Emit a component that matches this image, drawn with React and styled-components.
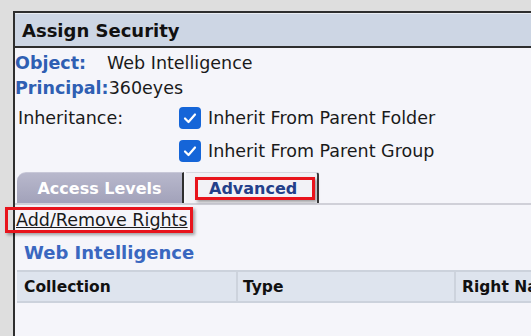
import React from 'react';
import styled, { createGlobalStyle } from 'styled-components';

const GlobalStyle = createGlobalStyle`
  html, body {
    margin: 0;
    padding: 0;
    background: #dedede;
    overflow: hidden;
  }
  body {
    font-family: "DejaVu Sans", Verdana, sans-serif;
  }
`;

const Page = styled.div`
  width: 531px;
  height: 336px;
  box-sizing: border-box;
  padding: 11px 0 0 13px;
  background: #dedede;
  overflow: hidden;
`;

const Dialog = styled.div`
  height: 100%;
  border-left: 2px solid #2e2e2e;
  border-top: 2px solid #2e2e2e;
  background: #f5f5fa;
  display: flex;
  flex-direction: column;
`;

const TitleBar = styled.div`
  height: 32px;
  background: #cdd6e4;
  border-top: 1px solid #e8ecf2;
  border-bottom: 2px solid #2e2e2e;
  display: flex;
  align-items: center;
  padding-left: 7px;
  font-weight: bold;
  font-size: 18px;
  color: #111;
`;

const Info = styled.div`
  padding-top: 2px;
`;

const InfoRow = styled.div`
  display: flex;
  align-items: center;
  height: 25px;
  font-size: 17.5px;
  color: #1a1a1a;
`;

const InfoLabel = styled.span`
  color: #2f5fb3;
  font-weight: bold;
  width: ${p => p.width || 'auto'};
`;

const Inherit = styled.div`
  display: grid;
  grid-template-columns: 161px auto;
  row-gap: 11px;
  padding: 7px 0 0 3px;
  font-size: 17.5px;
  color: #1a1a1a;
`;

const CheckRow = styled.label`
  display: flex;
  align-items: center;
  gap: 7px;
`;

const Box = styled.span`
  width: 22px;
  height: 22px;
  border-radius: 4px;
  background: #1565d8;
  display: flex;
  align-items: center;
  justify-content: center;
`;

const Tabs = styled.div`
  display: flex;
  align-items: flex-end;
  margin-top: 10px;
  padding-left: 2px;
  border-bottom: 2px solid #d0d0d8;
`;

const Tab = styled.div`
  height: 31px;
  display: flex;
  align-items: center;
  box-sizing: border-box;
  font-weight: bold;
  font-size: 16px;
  ${p => p.active ? `
    width: 133px;
    margin-left: 2px;
    background: #f2f2f6;
    border-top: 1px solid #d8d8e0;
    border-right: 2px solid #3a3a3a;
    border-top-right-radius: 3px;
    color: #23408a;
    padding-left: 9px;
  ` : `
    width: 167px;
    background: linear-gradient(#b8b8cc, #a2a2ba);
    border-top-left-radius: 9px;
    border-right: 2px solid #2e2e2e;
    border-top: 1px solid #c8c8d8;
    color: #fff;
    justify-content: center;
  `}
`;

const Highlight = styled.span`
  border: 3px solid #e8141c;
  box-shadow: 2px 2px 3px rgba(0, 0, 0, 0.35);
  display: inline-flex;
  align-items: center;
  box-sizing: border-box;
`;

const AdvancedBox = styled(Highlight)`
  width: 120px;
  height: 23px;
  padding-left: 11px;
`;

const LinkRow = styled.div`
  margin: 2px 0 0 -10px;
`;

const LinkBox = styled(Highlight)`
  height: 26px;
  padding: 0 2px 0 8px;
`;

const Link = styled.a`
  font-size: 17.5px;
  color: #1a1a1a;
  text-decoration: underline;
`;

const Section = styled.div`
  padding: 9px 0 0 9px;
  font-size: 18px;
  font-weight: bold;
  color: #3a67c0;
`;

const Table = styled.div`
  margin: 7px 0 0 2px;
  display: grid;
  grid-template-columns: 219px 218px 1fr;
  background: #dee4ee;
  border-top: 2px solid #ccd2dc;
  border-bottom: 2px solid #ccd2dc;
  height: 29px;
`;

const Th = styled.div`
  display: flex;
  align-items: center;
  padding-left: ${p => p.pad || 8}px;
  font-weight: bold;
  font-size: 15.5px;
  color: #111;
  white-space: nowrap;
  overflow: hidden;
  border-left: ${p => p.first ? 'none' : '2px solid #cdd3dd'};
`;

const Check = () => (
  <Box>
    <svg width="16" height="16" viewBox="0 0 16 16">
      <path d="M3 8.5 L6.5 12 L13 4.5" fill="none" stroke="#fff" strokeWidth="2.2" strokeLinecap="round" strokeLinejoin="round" />
    </svg>
  </Box>
);

export default function App() {
  return (
    <>
      <GlobalStyle />
      <Page>
        <Dialog>
          <TitleBar>Assign Security</TitleBar>
          <Info>
            <InfoRow>
              <InfoLabel width="92px">Object:</InfoLabel>Web Intelligence
            </InfoRow>
            <InfoRow>
              <InfoLabel>Principal:</InfoLabel>360eyes
            </InfoRow>
          </Info>
          <Inherit>
            <span style={{ alignSelf: 'center' }}>Inheritance:</span>
            <CheckRow><Check />Inherit From Parent Folder</CheckRow>
            <span />
            <CheckRow><Check />Inherit From Parent Group</CheckRow>
          </Inherit>
          <Tabs>
            <Tab>Access Levels</Tab>
            <Tab active>
              <AdvancedBox>Advanced</AdvancedBox>
            </Tab>
          </Tabs>
          <LinkRow>
            <LinkBox><Link href="#">Add/Remove Rights</Link></LinkBox>
          </LinkRow>
          <Section>Web Intelligence</Section>
          <Table>
            <Th first pad={7}>Collection</Th>
            <Th pad={5}>Type</Th>
            <Th pad={6}>Right Name</Th>
          </Table>
        </Dialog>
      </Page>
    </>
  );
}
